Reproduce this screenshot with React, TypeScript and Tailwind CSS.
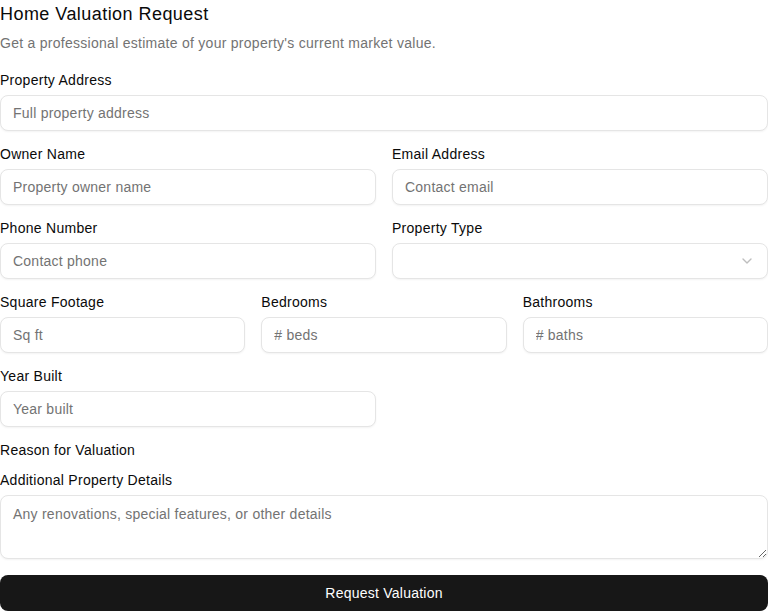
import React from "react";

const inputCls =
  "h-9 w-full rounded-lg border border-[#e5e5e5] bg-white px-3 py-1 text-sm tracking-[0.017em] text-[#0a0a0a] placeholder:text-[#737373] shadow-[0_1px_2px_rgba(0,0,0,0.05)] outline-none";

function Field({ label, children }: { label: string; children?: React.ReactNode }) {
  return (
    <div className="flex flex-col gap-2">
      <label className="text-sm leading-none text-[#0a0a0a]">{label}</label>
      {children}
    </div>
  );
}

export default function App() {
  return (
    <div className="w-[768px] bg-white font-['Liberation_Sans',Arial,sans-serif] tracking-[0.017em] text-[#0a0a0a]">
      <h1 className="text-lg leading-7 font-normal tracking-wide">Home Valuation Request</h1>
      <p className="mt-[5px] text-sm leading-5 text-[#737373]">
        Get a professional estimate of your property's current market value.
      </p>
      <form className="mt-5 flex flex-col gap-4" onSubmit={(e) => e.preventDefault()}>
        <Field label="Property Address">
          <input className={inputCls} placeholder="Full property address" />
        </Field>
        <div className="grid grid-cols-2 gap-4">
          <Field label="Owner Name">
            <input className={inputCls} placeholder="Property owner name" />
          </Field>
          <Field label="Email Address">
            <input className={inputCls} placeholder="Contact email" />
          </Field>
        </div>
        <div className="grid grid-cols-2 gap-4">
          <Field label="Phone Number">
            <input className={inputCls} placeholder="Contact phone" />
          </Field>
          <Field label="Property Type">
            <button
              type="button"
              className="flex h-9 w-full items-center justify-end rounded-lg border border-[#e5e5e5] bg-white px-3 shadow-[0_1px_2px_rgba(0,0,0,0.05)]"
            >
              <svg width="16" height="16" viewBox="0 0 24 24" fill="none" stroke="#a3a3a3" strokeWidth="2" strokeLinecap="round" strokeLinejoin="round" className="opacity-70">
                <path d="m6 9 6 6 6-6" />
              </svg>
            </button>
          </Field>
        </div>
        <div className="grid grid-cols-3 gap-4">
          <Field label="Square Footage">
            <input className={inputCls} placeholder="Sq ft" />
          </Field>
          <Field label="Bedrooms">
            <input className={inputCls} placeholder="# beds" />
          </Field>
          <Field label="Bathrooms">
            <input className={inputCls} placeholder="# baths" />
          </Field>
        </div>
        <div className="grid grid-cols-2 gap-4">
          <Field label="Year Built">
            <input className={inputCls} placeholder="Year built" />
          </Field>
        </div>
        <Field label="Reason for Valuation" />
        <Field label="Additional Property Details">
          <textarea
            className="h-16 w-full rounded-lg border border-[#e5e5e5] bg-white px-3 py-2 text-sm leading-5 tracking-[0.017em] placeholder:text-[#737373] shadow-[0_1px_2px_rgba(0,0,0,0.05)] outline-none"
            placeholder="Any renovations, special features, or other details"
          />
        </Field>
        <button
          type="submit"
          className="h-9 w-full rounded-lg bg-[#171717] text-sm tracking-[0.017em] text-white"
        >
          Request Valuation
        </button>
      </form>
    </div>
  );
}
